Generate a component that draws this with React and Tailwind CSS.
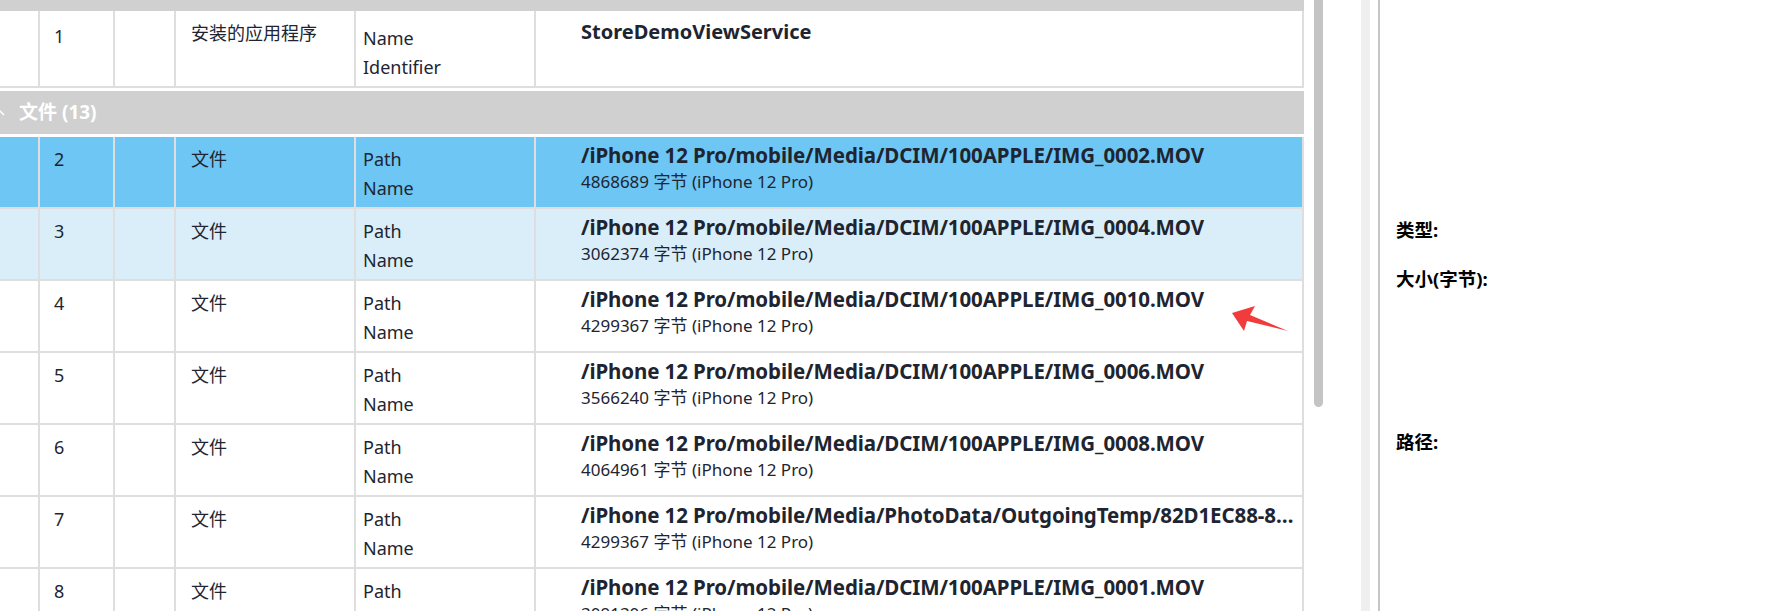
import React from 'react';

const FONT = { fontFamily: '"Noto Sans", "Noto Sans CJK SC", sans-serif' };

const files = [
  { no: 2, path: '/iPhone 12 Pro/mobile/Media/DCIM/100APPLE/IMG_0002.MOV', size: '4868689', state: 'selected' },
  { no: 3, path: '/iPhone 12 Pro/mobile/Media/DCIM/100APPLE/IMG_0004.MOV', size: '3062374', state: 'hover' },
  { no: 4, path: '/iPhone 12 Pro/mobile/Media/DCIM/100APPLE/IMG_0010.MOV', size: '4299367' },
  { no: 5, path: '/iPhone 12 Pro/mobile/Media/DCIM/100APPLE/IMG_0006.MOV', size: '3566240' },
  { no: 6, path: '/iPhone 12 Pro/mobile/Media/DCIM/100APPLE/IMG_0008.MOV', size: '4064961' },
  { no: 7, path: '/iPhone 12 Pro/mobile/Media/PhotoData/OutgoingTemp/82D1EC88-8F3A-4B2C-9E1D-6A7B5C4D3E21/RenderedVideo.MOV', size: '4299367' },
  { no: 8, path: '/iPhone 12 Pro/mobile/Media/DCIM/100APPLE/IMG_0001.MOV', size: '3091306' },
];

const rowGrid = 'grid grid-cols-[40px_75px_61px_180px_180px_1fr] border-b-2 border-[#dedede]';
const cell = 'border-r-2 border-[#dedede]';

function FileRow({ f }) {
  const bg =
    f.state === 'selected' ? 'bg-[#6dc6f4]' : f.state === 'hover' ? 'bg-[#d9eef9]' : 'bg-white';
  return (
    <div className={`${rowGrid} ${bg} h-[72px] shrink-0 text-[#1e2530]`}>
      <div className={cell} />
      <div className={`${cell} pl-[14px] pt-[10px] text-[18px] leading-[24px]`}>{f.no}</div>
      <div className={cell} />
      <div className={`${cell} pl-[15px] pt-[10px] text-[18px] leading-[24px]`}>文件</div>
      <div className={`${cell} pl-[7px] pt-[8px] text-[18px] leading-[29px]`}>
        <div>Path</div>
        <div>Name</div>
      </div>
      <div className={`${cell} pl-[45px] pt-[5px] min-w-0`}>
        <div className="text-[20.5px] leading-[26px] font-bold tracking-[-0.1px] truncate">{f.path}</div>
        <div className="mt-[2px] text-[17px] leading-[24px]">{f.size} 字节 (iPhone 12 Pro)</div>
      </div>
    </div>
  );
}

export default function App() {
  return (
    <div className="w-[1783px] h-[611px] overflow-hidden bg-white flex relative" style={FONT}>
      <div className="w-[1304px] shrink-0 flex flex-col">
        <div className="h-[11px] shrink-0 bg-[#d0d0d0]" />
        <div className={`${rowGrid} h-[77px] shrink-0 bg-white text-[#1e2530]`}>
          <div className={cell} />
          <div className={`${cell} pl-[14px] pt-[13px] text-[18px] leading-[24px]`}>1</div>
          <div className={cell} />
          <div className={`${cell} pl-[15px] pt-[10px] text-[18px] leading-[24px]`}>安装的应用程序</div>
          <div className={`${cell} pl-[7px] pt-[13px] text-[18px] leading-[29px]`}>
            <div>Name</div>
            <div>Identifier</div>
          </div>
          <div className={`${cell} pl-[45px] pt-[8px] text-[20px] leading-[26px] font-bold`}>
            StoreDemoViewService
          </div>
        </div>
        <div className="h-[3px] shrink-0" />
        <div className="h-[43px] shrink-0 bg-[#d0d0d0] flex items-center overflow-hidden text-white font-bold text-[19px]">
          <svg width="10" height="10" viewBox="0 0 10 10" className="-ml-[5px] mr-[14px]">
            <polyline points="1,7 5,3 9,7" fill="none" stroke="white" strokeWidth="1.5" />
          </svg>
          <span>文件 (13)</span>
        </div>
        <div className="h-[3px] shrink-0" />
        {files.map(f => (
          <FileRow key={f.no} f={f} />
        ))}
      </div>

      <div className="w-[57px] shrink-0 pl-[10px]">
        <div className="w-[9px] h-[407px] bg-[#c4c4c4] rounded-b-full" />
      </div>
      <div className="w-[9px] shrink-0 bg-[#efefef]" />
      <div className="w-[8px] shrink-0" />
      <div className="w-[2px] shrink-0 bg-[#c6c6c6]" />

      <div className="flex-1 pl-[16px] text-black font-bold text-[18.5px] leading-[24px]">
        <div className="mt-[218px]">类型:</div>
        <div className="mt-[25px]">大小(字节):</div>
        <div className="mt-[139px]">路径:</div>
      </div>

      <svg
        className="absolute left-[1228px] top-[304px]"
        width="64"
        height="32"
        viewBox="0 0 64 32"
      >
        <polygon points="4,9 27,2 22,11 60,27 19,17 16,27" fill="#f23b3b" />
      </svg>
    </div>
  );
}
